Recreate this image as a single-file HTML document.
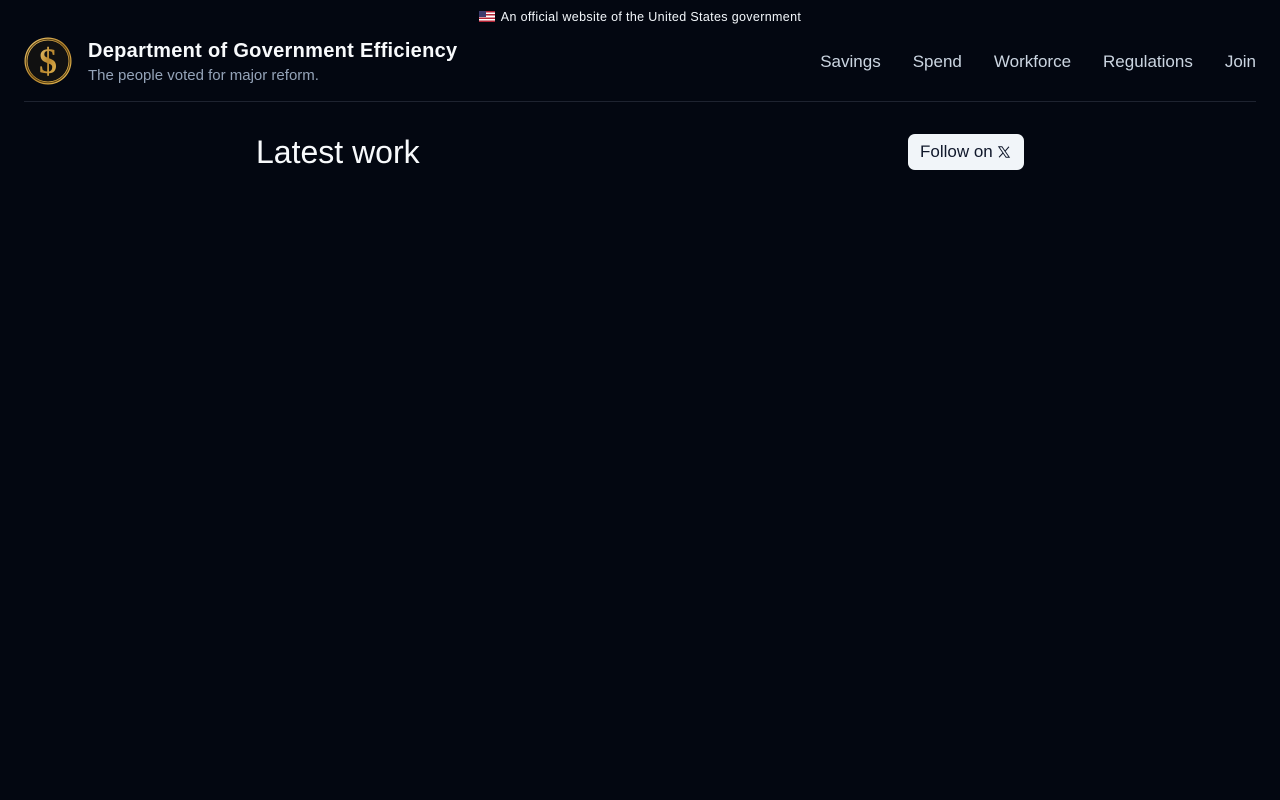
<!DOCTYPE html>
<html><head><meta charset="utf-8"><style>
*{margin:0;padding:0;box-sizing:border-box}
body{width:1280px;height:800px;background:#030711;font-family:"Liberation Sans",sans-serif;color:#fff;overflow:hidden;position:relative}
.top{position:absolute;top:10px;left:0;width:100%;text-align:center;font-size:12.5px;letter-spacing:0.35px;color:#f1f5f9}
.flag{display:inline-block;width:16px;height:11px;vertical-align:-1px;margin-right:6px;background:repeating-linear-gradient(#b22234 0 1.57px,#fff 1.57px 3.14px);position:relative}
.flag:before{content:"";position:absolute;left:0;top:0;width:7px;height:6px;background:#3c3b6e}
.logo{position:absolute;left:24px;top:37px;width:48px;height:48px}
.t1{position:absolute;left:88px;top:40px;font-size:20px;font-weight:bold;letter-spacing:0.3px;color:#f8fafc}
.t2{position:absolute;left:88px;top:67px;font-size:15px;color:#94a3b8}
nav{position:absolute;right:24px;top:52px;font-size:17px;color:#cbd5e1;display:flex;gap:32px}
.hr{position:absolute;left:24px;right:24px;top:101px;height:1px;background:#1e2330}
h1{position:absolute;left:256px;top:134px;font-size:32px;font-weight:normal;color:#f8fafc}
.btn{position:absolute;left:908px;top:134px;width:116px;height:36px;border-radius:7px;background:#f1f5f9;color:#0f172a;font-size:17px;line-height:36px;padding-left:12px}
</style></head><body>
<div class="top"><span class="flag"></span>An official website of the United States government</div>
<svg class="logo" viewBox="0 0 48 48"><defs><linearGradient id="g" x1="0" y1="0" x2="1" y2="1"><stop offset="0" stop-color="#f5d27a"/><stop offset=".5" stop-color="#b8862e"/><stop offset="1" stop-color="#f0c45a"/></linearGradient></defs><circle cx="24" cy="24" r="23.5" fill="url(#g)"/><circle cx="24" cy="24" r="20.5" fill="#111"/><circle cx="24" cy="24" r="21.8" fill="none" stroke="#5b4212" stroke-width="1"/><text x="24" y="36" text-anchor="middle" font-family="Liberation Serif" font-weight="bold" font-size="36" fill="url(#g)">$</text></svg>
<div class="t1">Department of Government Efficiency</div>
<div class="t2">The people voted for major reform.</div>
<nav><span>Savings</span><span>Spend</span><span>Workforce</span><span>Regulations</span><span>Join</span></nav>
<div class="hr"></div>
<h1>Latest work</h1>
<div class="btn">Follow on <svg width="14" height="14" viewBox="0 0 24 24" style="vertical-align:-2px"><path d="M3 3h5.5l12.5 18h-5.5z" fill="none" stroke="#0f172a" stroke-width="1.6"/><path d="M20.5 3L13.5 11M10.5 13.5L3.5 21" stroke="#0f172a" stroke-width="1.8"/></svg></div>
</body></html>
